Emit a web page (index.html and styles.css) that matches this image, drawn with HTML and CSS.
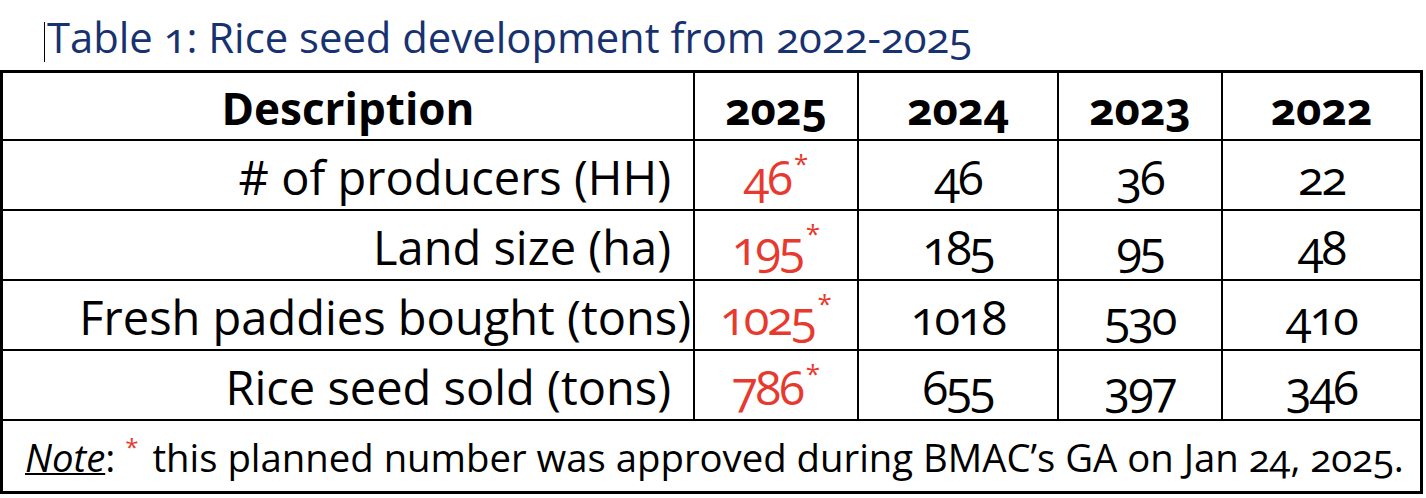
FILE: index.html
```html
<!DOCTYPE html>
<html lang="en">
<head>
<meta charset="utf-8">
<title>Table 1: Rice seed development from 2022-2025</title>
<link rel="stylesheet" href="styles.css">
</head>
<body>
<div class="caption"><span class="caret"></span><span class="caption-text">Table 1: Rice seed development from 2022-2025</span></div>
<div class="grid">
  <div class="cell head">Description</div>
  <div class="cell head">2025</div>
  <div class="cell head">2024</div>
  <div class="cell head">2023</div>
  <div class="cell head last">2022</div>

  <div class="cell body label"># of producers (HH)</div>
  <div class="cell body num red">46<span class="sup">*</span></div>
  <div class="cell body num">46</div>
  <div class="cell body num">36</div>
  <div class="cell body num last">22</div>

  <div class="cell body label">Land size (ha)</div>
  <div class="cell body num red">195<span class="sup">*</span></div>
  <div class="cell body num">185</div>
  <div class="cell body num">95</div>
  <div class="cell body num last">48</div>

  <div class="cell body label wide">Fresh paddies bought (tons)</div>
  <div class="cell body num red">1025<span class="sup">*</span></div>
  <div class="cell body num">1018</div>
  <div class="cell body num">530</div>
  <div class="cell body num last">410</div>

  <div class="cell body label">Rice seed sold (tons)</div>
  <div class="cell body num red">786<span class="sup">*</span></div>
  <div class="cell body num">655</div>
  <div class="cell body num">397</div>
  <div class="cell body num last">346</div>

  <div class="note"><span class="note-label">Note</span>: <span class="note-star">*</span> <span class="note-text">this planned number was approved during BMAC’s GA on Jan 24, 2025.</span></div>
</div>
</body>
</html>
```
FILE: styles.css
```css
body {
  margin: 0;
  background: #fff;
  color: #000;
  font-family: "Open Sans", "Noto Sans", sans-serif;
  font-variant-numeric: oldstyle-nums;
}

.caption {
  height: 70px;
  display: flex;
  align-items: flex-start;
}

.caret {
  width: 1px;
  height: 40px;
  margin: 22px 0 0 44px;
  background: #000;
}

.caption-text {
  margin: 9px 0 0 2px;
  font-size: 41.8px;
  line-height: 56px;
  color: #17326f;
  white-space: nowrap;
}

.grid {
  display: grid;
  grid-template-columns: 692px 164px 200px 164px 197px;
  grid-template-rows: 68px 70px 70px 70px 70px 70px;
  width: max-content;
  border: 3px solid #000;
}

.cell {
  box-sizing: border-box;
  display: block;
  text-align: center;
  border-right: 2px solid #000;
  border-bottom: 2px solid #000;
  white-space: nowrap;
}

.cell.last {
  border-right: 0;
}

.head {
  font-weight: 700;
  font-size: 44px;
  line-height: 50px;
  padding-top: 10px;
}

.body {
  font-size: 47px;
  line-height: 50px;
  padding-top: 11px;
}

.label {
  text-align: right;
  padding-right: 22px;
}

.label.wide {
  padding-right: 2px;
}

.num {
  letter-spacing: -2px;
}

.red {
  color: #e8392f;
}

.sup {
  font-size: 26px;
  line-height: 0;
  vertical-align: 22px;
  letter-spacing: 0;
  margin-left: 3px;
}

.note {
  grid-column: 1 / -1;
  box-sizing: border-box;
  padding: 11px 0 0 22px;
  font-size: 38.3px;
  line-height: 50px;
  white-space: nowrap;
}

.note-label {
  font-style: italic;
  text-decoration: underline;
  text-decoration-thickness: 2px;
}

.note-star {
  color: #e8392f;
  font-size: 24px;
  line-height: 0;
  vertical-align: 16px;
}

.note-text {
  margin-left: 4px;
}
```
